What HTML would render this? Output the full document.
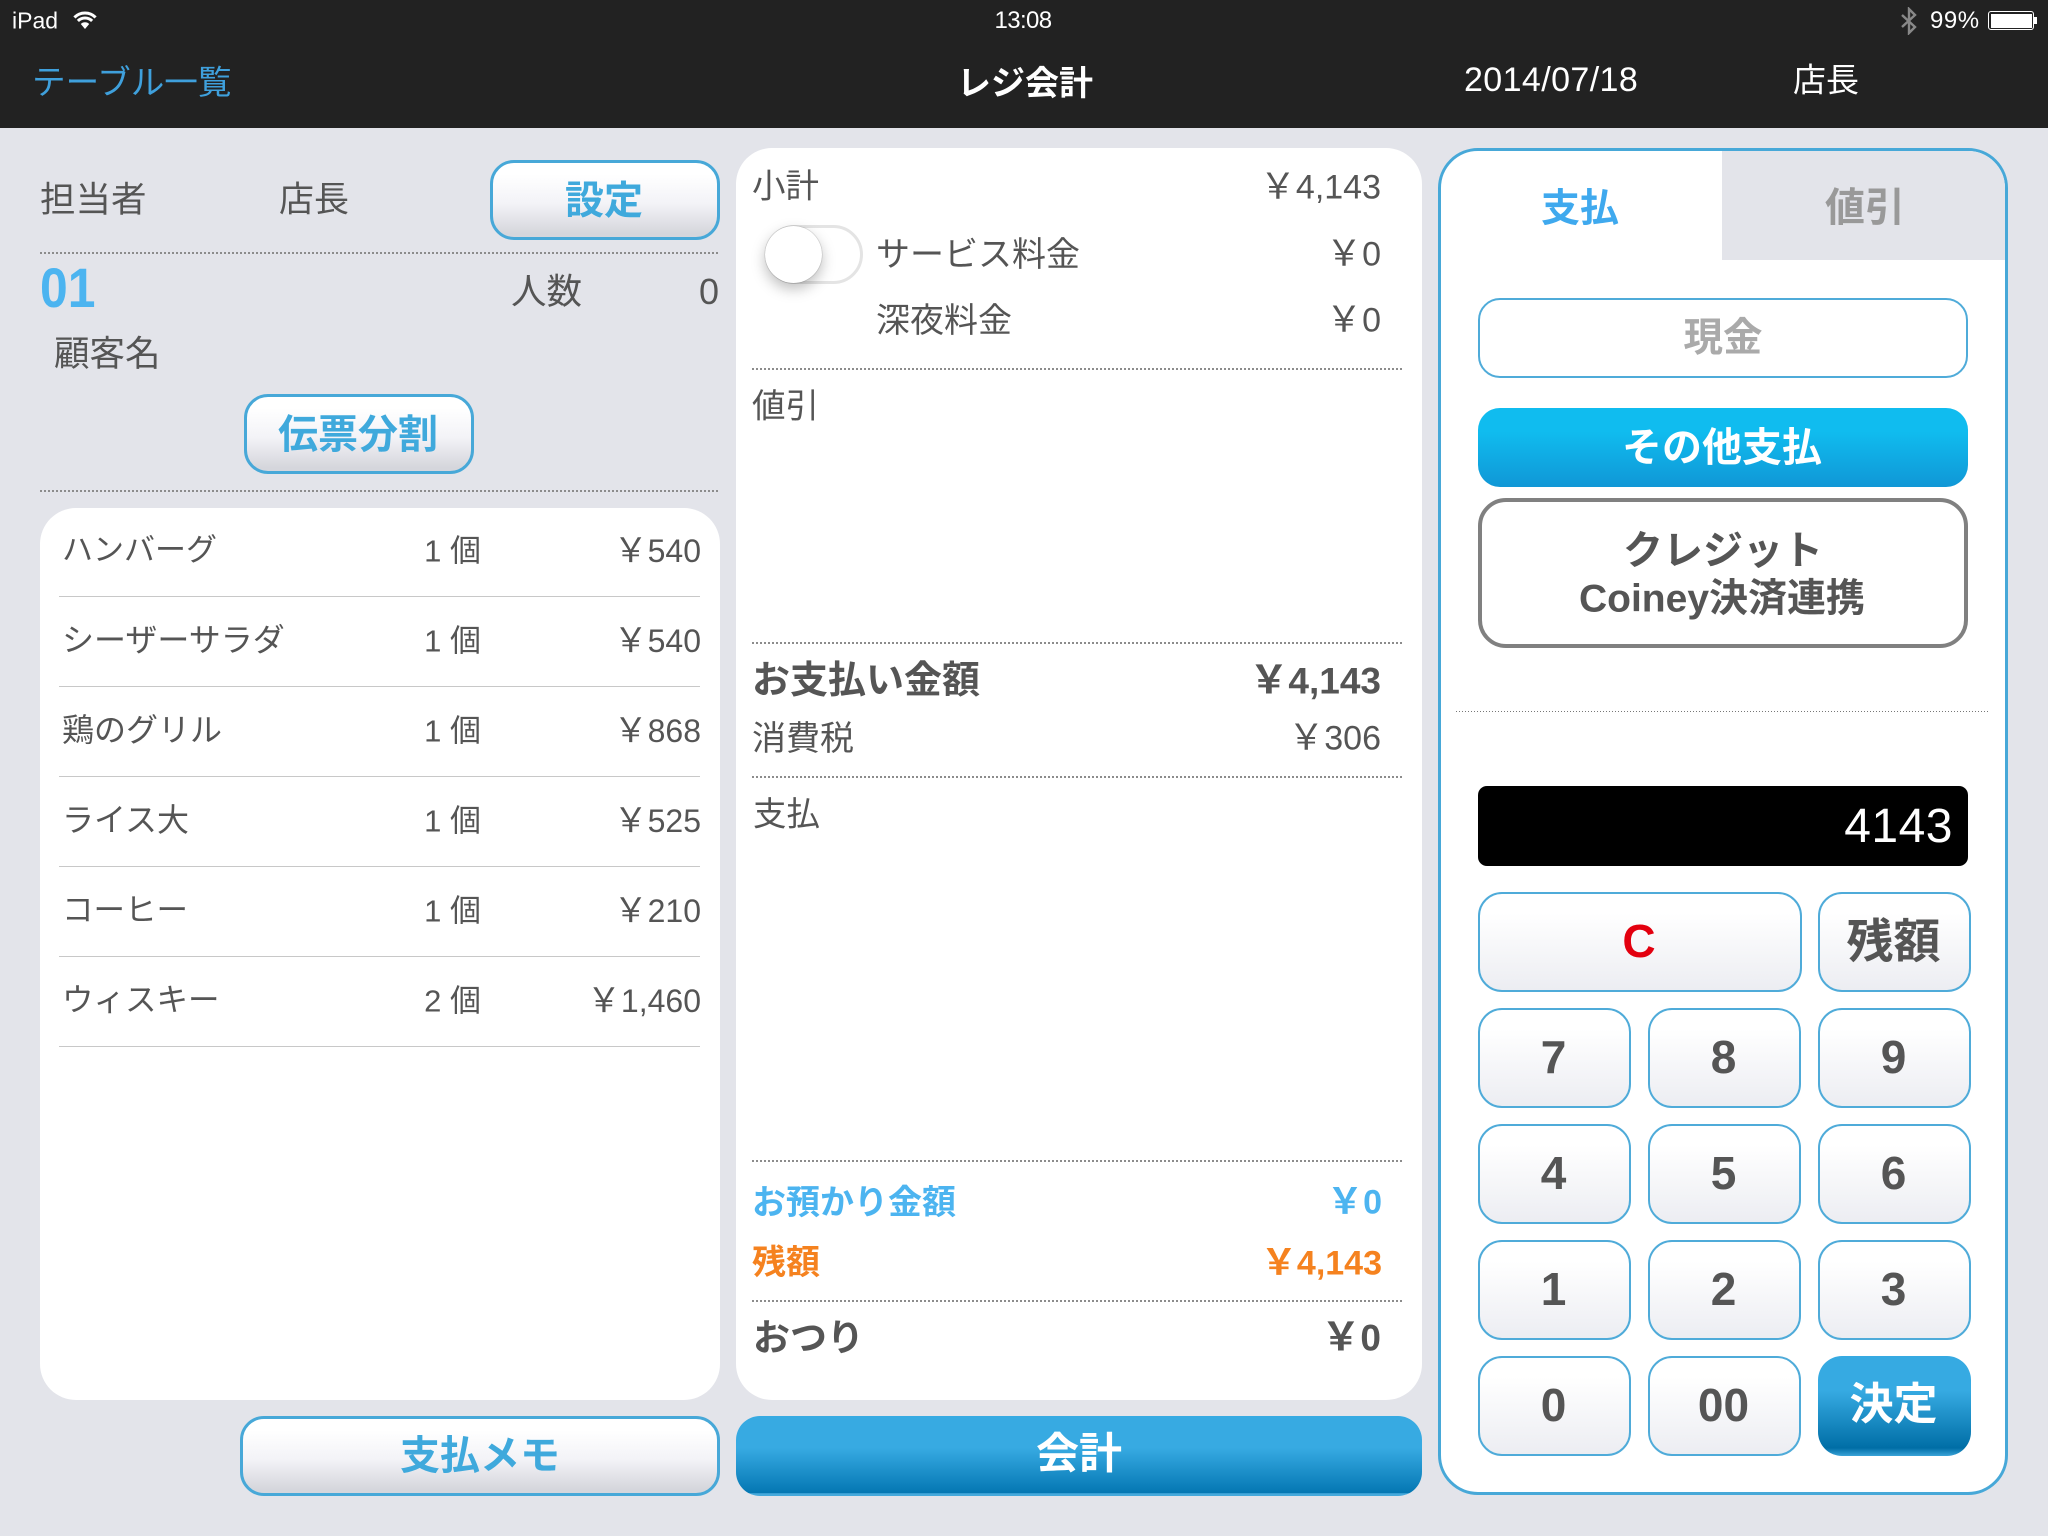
<!DOCTYPE html>
<html lang="ja"><head><meta charset="utf-8"><title>レジ会計</title>
<style>
html,body{margin:0;padding:0}
body{width:2048px;height:1536px;position:relative;overflow:hidden;background:#e3e4ea;font-family:"Liberation Sans","Noto Sans CJK JP",sans-serif;color:#555}
.a{position:absolute;box-sizing:border-box}
.t{position:absolute;white-space:nowrap;line-height:1;transform:translateY(-50%)}
.r{transform:translate(-100%,-50%)}
.c{transform:translate(-50%,-50%)}
.b{font-weight:700}
.d{position:absolute;height:2px;background:repeating-linear-gradient(90deg,#8c8c8c 0 2px,transparent 2px 4px)}
.btn{position:absolute;box-sizing:border-box;border:3px solid #47a8d8;border-radius:24px;background:linear-gradient(#fff 15%,#f3f3f7 55%,#d5d6dc 95%);color:#3fa9dc;font-weight:700;display:flex;align-items:center;justify-content:center;font-size:40px;line-height:1;padding-top:2px}
.k{position:absolute;box-sizing:border-box;border:2.5px solid #4fabd9;border-radius:24px;background:linear-gradient(#fff 20%,#ecedf2);color:#555;font-weight:700;display:flex;align-items:center;justify-content:center;font-size:46px;line-height:1;height:100px;width:153px;padding:0 2px 2px 0}
.line{position:absolute;left:59px;width:641px;height:1px;background:#c8c8c8}
.y{font-family:"Noto Sans CJK JP",sans-serif;font-size:1.06em}
</style></head><body>

<div class="a" style="left:0;top:0;width:2048px;height:128px;background:#222"></div>
<div class="t" style="left:12px;top:21px;font-size:23px;color:#fff">iPad</div>
<svg class="a" style="left:72px;top:10px" width="26" height="20" viewBox="0 0 26 20"><path d="M2.4 7.4A15 15 0 0 1 23.6 7.4M5.9 10.9A10 10 0 0 1 20.1 10.9" fill="none" stroke="#fff" stroke-width="3"/><path d="M13 19L8.8 14A6 6 0 0 1 17.2 14Z" fill="#fff"/></svg>
<div class="t c" style="left:1023px;top:21px;font-size:24px;color:#fff;letter-spacing:-.6px">13:08</div>
<svg class="a" style="left:1900px;top:7px" width="18" height="28" viewBox="0 0 18 28"><path d="M2 8L15 20L9 26V2L15 8L2 20" fill="none" stroke="#888" stroke-width="2.4"/></svg>
<div class="t" style="left:1930px;top:21px;font-size:24px;color:#fff;letter-spacing:.5px">99%</div>
<div class="a" style="left:1988px;top:11px;width:46px;height:19px;border:1.5px solid #fff;border-radius:3px;padding:1.5px"><div style="width:100%;height:100%;background:#fff"></div></div>
<div class="a" style="left:2034px;top:17px;width:3px;height:7px;background:#fff"></div>

<div class="t" style="left:32px;top:84px;font-size:33.6px;color:#3fa0dc">テーブル一覧</div>
<div class="t c b" style="left:1025px;top:84px;font-size:34px;color:#fff">レジ会計</div>
<div class="t" style="left:1464px;top:80px;font-size:34px;color:#fff;letter-spacing:.4px">2014/07/18</div>
<div class="t" style="left:1793px;top:80px;font-size:33px;color:#fff">店長</div>

<div class="t" style="left:40px;top:200px;font-size:35.5px">担当者</div>
<div class="t" style="left:279px;top:200px;font-size:35px">店長</div>
<div class="btn" style="left:490px;top:160px;width:230px;height:80px;font-size:39px;padding-right:2px">設定</div>
<div class="d" style="left:40px;top:252px;width:680px"></div>
<div class="t b" style="left:40px;top:288px;font-size:56px;color:#4cb4f0;transform:translateY(-50%) scaleX(.89);transform-origin:left center">01</div>
<div class="t" style="left:511px;top:292px;font-size:35.5px">人数</div>
<div class="t r" style="left:719px;top:292px;font-size:36px">0</div>
<div class="t" style="left:54px;top:354px;font-size:35.5px">顧客名</div>
<div class="btn" style="left:244px;top:394px;width:230px;height:80px;padding-right:2px">伝票分割</div>
<div class="d" style="left:40px;top:490px;width:680px"></div>

<div class="a" style="left:40px;top:508px;width:680px;height:892px;background:#fff;border-radius:36px"></div>
<div class="line" style="top:596px"></div><div class="line" style="top:686px"></div><div class="line" style="top:776px"></div><div class="line" style="top:866px"></div><div class="line" style="top:956px"></div><div class="line" style="top:1046px"></div>

<div class="t" style="left:62px;top:550px;font-size:31px">ハンバーグ</div><div class="t r" style="left:481px;top:551px;font-size:31px">1 個</div><div class="t r" style="left:701px;top:549px;font-size:32px"><span class="y">￥</span>540</div>
<div class="t" style="left:62px;top:640px;font-size:32px">シーザーサラダ</div><div class="t r" style="left:481px;top:641px;font-size:31px">1 個</div><div class="t r" style="left:701px;top:639px;font-size:32px"><span class="y">￥</span>540</div>
<div class="t" style="left:62px;top:730px;font-size:32px">鶏のグリル</div><div class="t r" style="left:481px;top:731px;font-size:31px">1 個</div><div class="t r" style="left:701px;top:729px;font-size:32px"><span class="y">￥</span>868</div>
<div class="t" style="left:62px;top:820px;font-size:32px">ライス大</div><div class="t r" style="left:481px;top:821px;font-size:31px">1 個</div><div class="t r" style="left:701px;top:819px;font-size:32px"><span class="y">￥</span>525</div>
<div class="t" style="left:62px;top:910px;font-size:31.5px">コーヒー</div><div class="t r" style="left:481px;top:911px;font-size:31px">1 個</div><div class="t r" style="left:701px;top:909px;font-size:32px"><span class="y">￥</span>210</div>
<div class="t" style="left:62px;top:1000px;font-size:31.5px">ウィスキー</div><div class="t r" style="left:481px;top:1001px;font-size:31px">2 個</div><div class="t r" style="left:701px;top:999px;font-size:32px"><span class="y">￥</span>1,460</div>

<div class="btn" style="left:240px;top:1416px;width:480px;height:80px;padding-top:0">支払メモ</div>

<div class="a" style="left:736px;top:148px;width:686px;height:1252px;background:#fff;border-radius:36px"></div>
<div class="t" style="left:752px;top:187px;font-size:33.5px">小計</div>
<div class="t r" style="left:1381px;top:185px;font-size:34px"><span class="y">￥</span>4,143</div>
<div class="a" style="left:765px;top:225px;width:98px;height:59px;border:3px solid #e4e4e4;border-radius:30px;background:#fff"></div>
<div class="a" style="left:765px;top:226px;width:57px;height:57px;border-radius:50%;background:#fff;box-shadow:0 6px 14px rgba(0,0,0,.26),0 0 1px rgba(0,0,0,.5)"></div>
<div class="t" style="left:876px;top:255px;font-size:34px">サービス料金</div>
<div class="t r" style="left:1381px;top:252px;font-size:34px"><span class="y">￥</span>0</div>
<div class="t" style="left:876px;top:321px;font-size:34px">深夜料金</div>
<div class="t r" style="left:1381px;top:318px;font-size:34px"><span class="y">￥</span>0</div>
<div class="d" style="left:752px;top:368px;width:651px"></div>
<div class="t" style="left:752px;top:407px;font-size:33.5px">値引</div>
<div class="d" style="left:752px;top:642px;width:651px"></div>
<div class="t b" style="left:752px;top:681px;font-size:38px">お支払い金額</div>
<div class="t r b" style="left:1381px;top:679px;font-size:37px"><span class="y">￥</span>4,143</div>
<div class="t" style="left:752px;top:739px;font-size:34px">消費税</div>
<div class="t r" style="left:1381px;top:736px;font-size:34px"><span class="y">￥</span>306</div>
<div class="d" style="left:752px;top:776px;width:651px"></div>
<div class="t" style="left:753px;top:815px;font-size:33.5px">支払</div>
<div class="d" style="left:752px;top:1160px;width:651px"></div>
<div class="t b" style="left:752px;top:1203px;font-size:34px;color:#4cb4f0">お預かり金額</div>
<div class="t r b" style="left:1382px;top:1200px;font-size:34px;color:#4cb4f0"><span class="y">￥</span>0</div>
<div class="t b" style="left:752px;top:1263px;font-size:34px;color:#f5821f">残額</div>
<div class="t r b" style="left:1382px;top:1261px;font-size:34px;color:#f5821f"><span class="y">￥</span>4,143</div>
<div class="d" style="left:752px;top:1300px;width:651px"></div>
<div class="t b" style="left:753px;top:1338px;font-size:37px">おつり</div>
<div class="t r b" style="left:1381px;top:1336px;font-size:37px"><span class="y">￥</span>0</div>
<div class="a" style="left:736px;top:1416px;width:686px;height:80px;border-radius:24px;background:linear-gradient(#37aae2 40%,#0477b3 96%,#45a9dc 97%)"></div>
<div class="t c b" style="left:1079px;top:1455px;font-size:43px;color:#fff">会計</div>

<div class="a" style="left:1438px;top:148px;width:570px;height:1347px;border:3px solid #47a8d8;border-radius:40px;background:#fff"></div>
<div class="a" style="left:1722px;top:151px;width:283px;height:109px;background:#e3e4ea;border-top-right-radius:37px"></div>
<div class="t c b" style="left:1580px;top:209px;font-size:39px;color:#3fa9ee">支払</div>
<div class="t c b" style="left:1865px;top:208px;font-size:40px;color:#999">値引</div>
<div class="a" style="left:1478px;top:298px;width:490px;height:80px;border:2.5px solid #4fabd9;border-radius:22px;background:#fff;color:#aaa;font-weight:700;font-size:39.5px;line-height:1;display:flex;align-items:center;justify-content:center;padding-top:2px">現金</div>
<div class="a" style="left:1478px;top:408px;width:490px;height:79px;border-radius:22px;background:linear-gradient(#10bcef 30%,#1097d6);color:#fff;font-weight:700;font-size:40px;line-height:1;display:flex;align-items:center;justify-content:center;padding:1px 2px 0 0">その他支払</div>
<div class="a" style="left:1478px;top:498px;width:490px;height:150px;border:4px solid #808080;border-radius:28px;background:#fff"></div>
<div class="t c b" style="left:1723px;top:551px;font-size:40px">クレジット</div>
<div class="t c b" style="left:1722px;top:599px;font-size:39px">Coiney決済連携</div>
<div class="d" style="left:1456px;top:711px;width:534px;height:1px;background:repeating-linear-gradient(90deg,#777 0 1px,transparent 1px 3px)"></div>
<div class="a" style="left:1478px;top:786px;width:490px;height:80px;background:#000;border-radius:9px"></div>
<div class="t r" style="left:1953px;top:827px;font-size:48px;color:#fff;letter-spacing:.5px">4143</div>

<div class="k" style="left:1478px;top:892px;width:324px;color:#e3000f">C</div>
<div class="k" style="left:1818px;top:892px;font-size:47px">残額</div>
<div class="k" style="left:1478px;top:1008px">7</div><div class="k" style="left:1648px;top:1008px">8</div><div class="k" style="left:1818px;top:1008px">9</div>
<div class="k" style="left:1478px;top:1124px">4</div><div class="k" style="left:1648px;top:1124px">5</div><div class="k" style="left:1818px;top:1124px">6</div>
<div class="k" style="left:1478px;top:1240px">1</div><div class="k" style="left:1648px;top:1240px">2</div><div class="k" style="left:1818px;top:1240px">3</div>
<div class="k" style="left:1478px;top:1356px">0</div><div class="k" style="left:1648px;top:1356px">00</div>
<div class="k" style="left:1818px;top:1356px;border:0;background:linear-gradient(#36aae2 35%,#006ea6 92%,#3aa3d8);color:#fff;font-size:44px">決定</div>

</body></html>
